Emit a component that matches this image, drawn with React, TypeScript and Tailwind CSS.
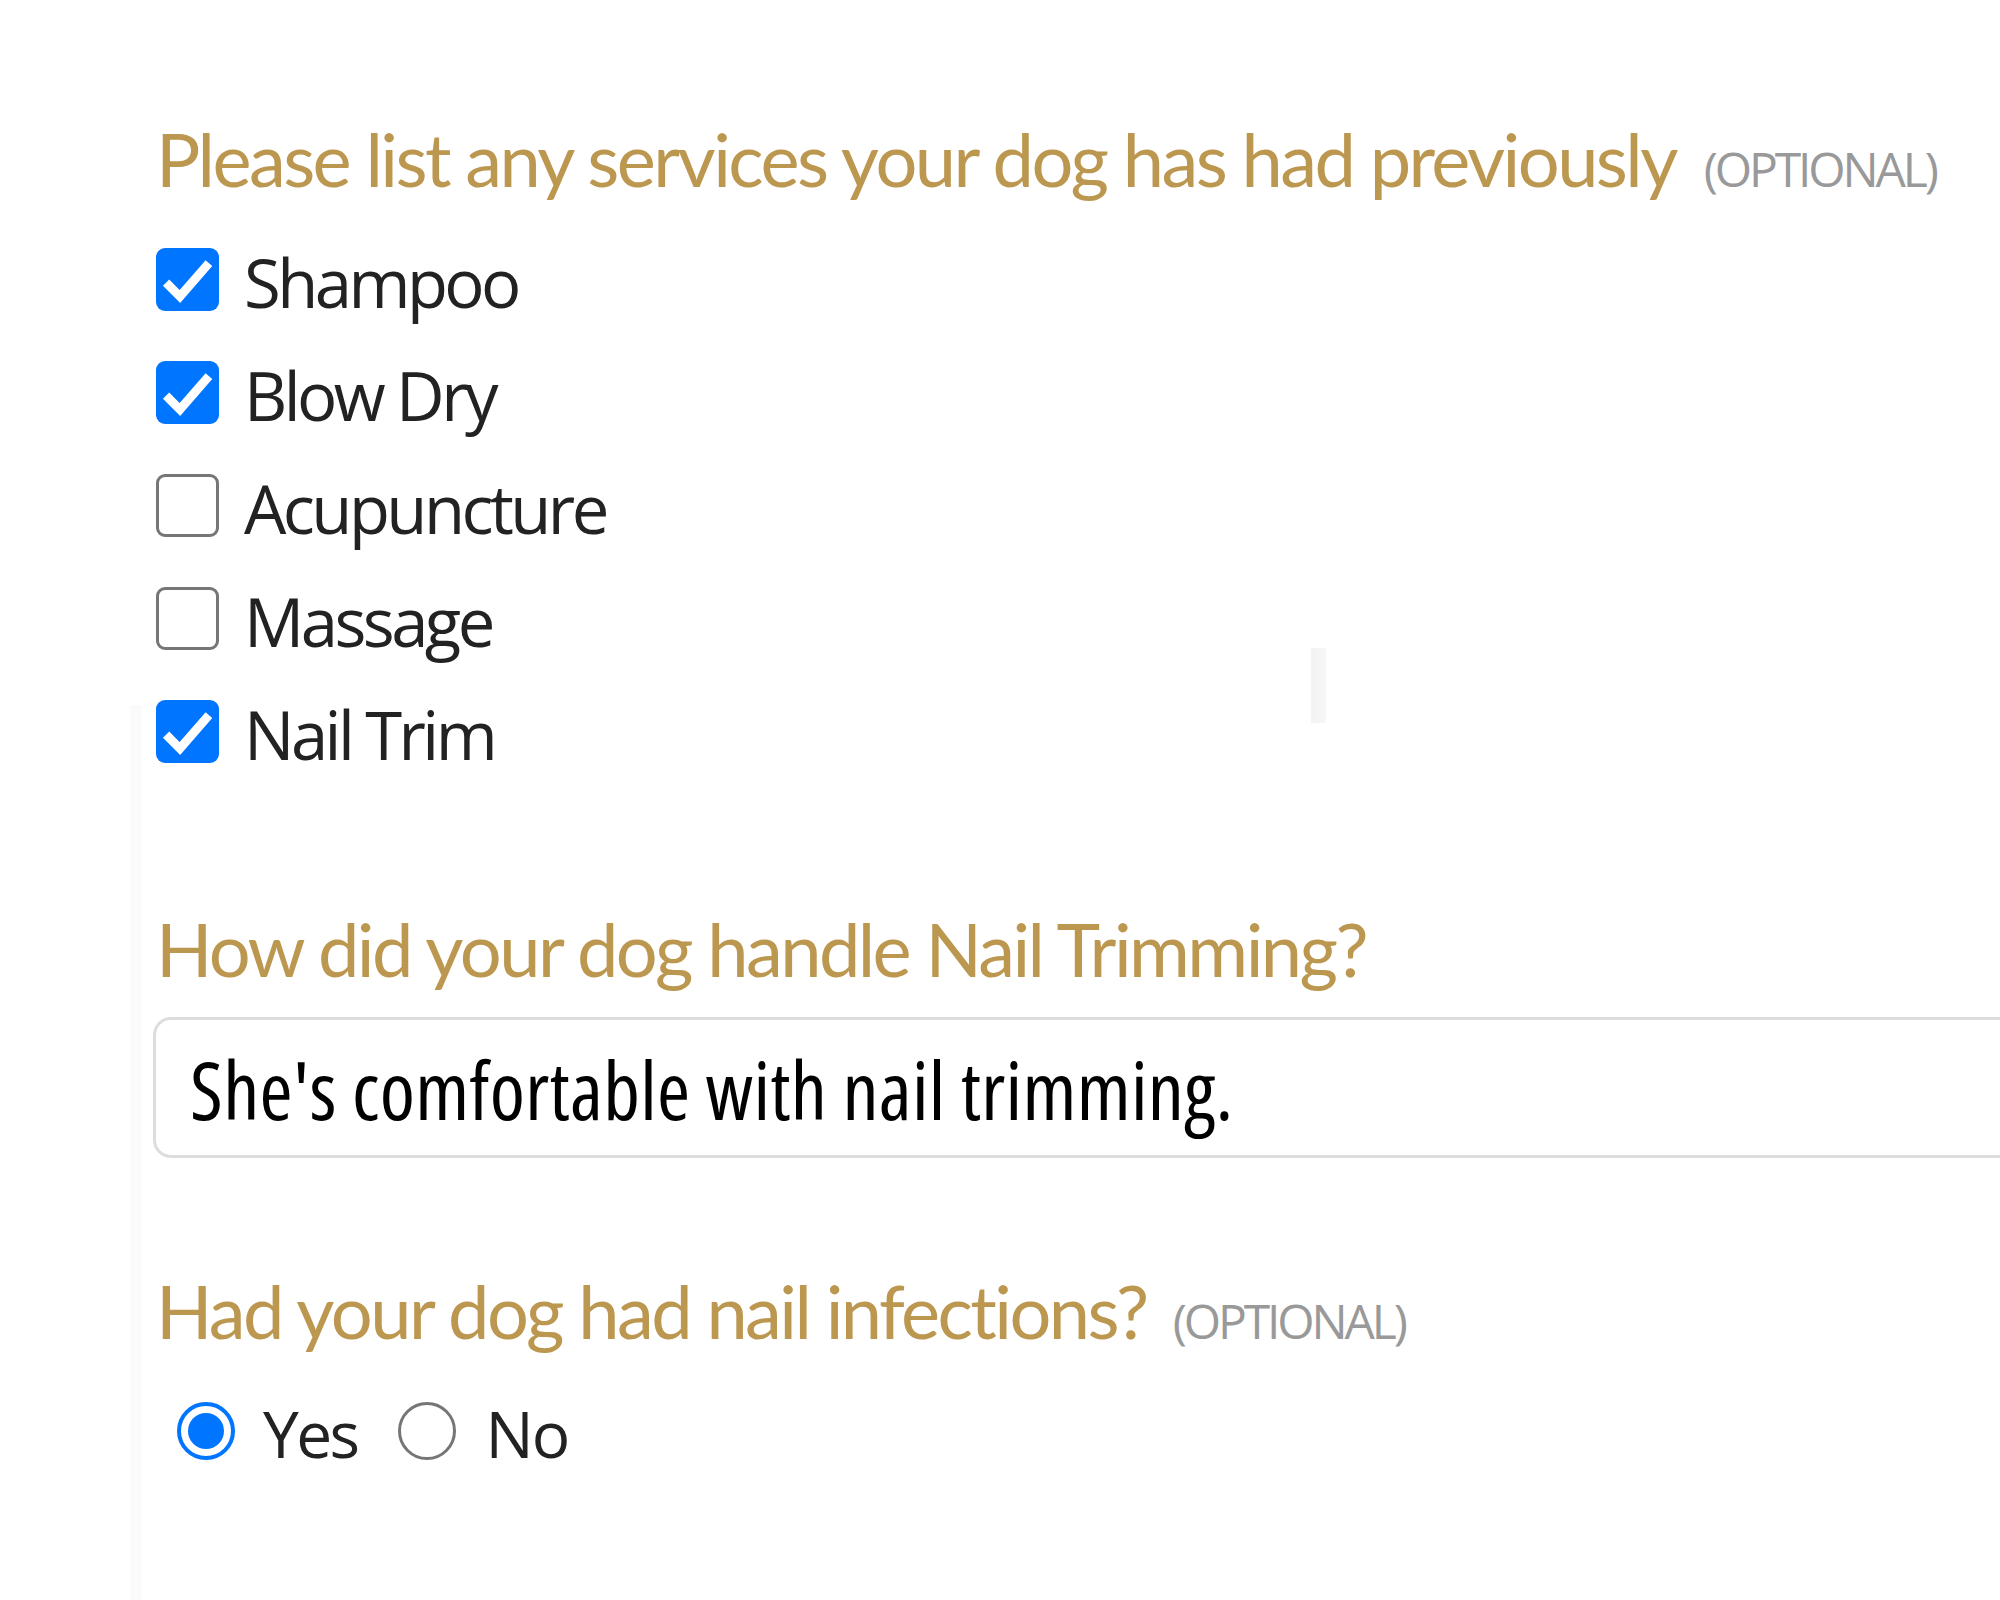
import React from "react";

const heading = "font-['Lato','Open_Sans',sans-serif] text-[74px] leading-[1.2] text-[#bc974f] tracking-[-0.035em] whitespace-nowrap";
const optional = "font-['Open_Sans',sans-serif] text-[48px] text-[#999999] tracking-[-0.065em] whitespace-nowrap";
const label = "font-['Open_Sans',sans-serif] text-[67px] text-[#222222] tracking-[-0.053em] whitespace-nowrap";

const services = [
  { name: "Shampoo", checked: true },
  { name: "Blow Dry", checked: true },
  { name: "Acupuncture", checked: false },
  { name: "Massage", checked: false },
  { name: "Nail Trim", checked: true },
];

function Checkbox({ checked }: { checked: boolean }) {
  if (!checked) {
    return <div className="w-[63px] h-[63px] shrink-0 rounded-[9px] border-[3px] border-[#767676] bg-white" />;
  }
  return (
    <div className="w-[63px] h-[63px] shrink-0 rounded-[9px] bg-[#0075ff] flex items-center justify-center">
      <svg viewBox="0 0 100 100" className="w-[63px] h-[63px]">
        <path d="M16 55 L38 77 L84 24" fill="none" stroke="white" strokeWidth="14" strokeLinejoin="miter" />
      </svg>
    </div>
  );
}

function Radio({ checked }: { checked: boolean }) {
  if (checked) {
    return (
      <div className="w-[58px] h-[58px] shrink-0 rounded-full border-[4px] border-[#0075ff] bg-white flex items-center justify-center">
        <div className="w-[36px] h-[36px] rounded-full bg-[#0075ff]" />
      </div>
    );
  }
  return <div className="w-[58px] h-[58px] shrink-0 rounded-full border-[3px] border-[#767676] bg-white" />;
}

export default function App() {
  return (
    <div className="relative w-[2000px] h-[1600px] overflow-hidden bg-white pl-[156px] pt-[115px]">
      <div className="absolute left-[130px] top-[705px] w-[12px] h-[900px] bg-[#fbfbfb] pointer-events-none" />
      <div className="absolute left-[1311px] top-[648px] w-[15px] h-[75px] bg-gradient-to-r from-[#f3f3f3] to-[#f7f7f7] pointer-events-none" />

      <div className="relative flex items-baseline gap-[28px]">
        <h2 className={heading}>Please list any services your dog has had previously</h2>
        <span className={optional}>(OPTIONAL)</span>
      </div>

      <div className="relative mt-[18px] flex flex-col">
        {services.map((s) => (
          <label key={s.name} className="h-[113px] flex items-center gap-[25px]">
            <Checkbox checked={s.checked} />
            <span className={label + " translate-y-[3px]"}>{s.name}</span>
          </label>
        ))}
      </div>

      <h2 className={heading + " relative mt-[117px]"}>How did your dog handle Nail Trimming?</h2>

      <div className="relative mt-[23px] -ml-[3px] w-[1900px] h-[141px] rounded-[18px] border-[3px] border-[#dddddd] bg-white flex items-center pl-[34px]">
        <span className="font-['Open_Sans',sans-serif] text-[80px] text-black font-stretch-[77%] tracking-[0.004em] whitespace-nowrap translate-y-[2px]">
          She's comfortable with nail trimming.
        </span>
      </div>

      <div className="relative mt-[109px] flex items-baseline gap-[26px]">
        <h2 className={heading}>Had your dog had nail infections?</h2>
        <span className={optional}>(OPTIONAL)</span>
      </div>

      <div className="relative mt-[30px] ml-[21px] h-[88px] flex items-center">
        <Radio checked={true} />
        <span className="ml-[28px] font-['Open_Sans',sans-serif] text-[64px] text-[#222222] tracking-[-0.04em] translate-y-[3px]">Yes</span>
        <div className="ml-[40px]">
          <Radio checked={false} />
        </div>
        <span className="ml-[30px] font-['Open_Sans',sans-serif] text-[64px] text-[#222222] tracking-[-0.03em] translate-y-[3px]">No</span>
      </div>
    </div>
  );
}
